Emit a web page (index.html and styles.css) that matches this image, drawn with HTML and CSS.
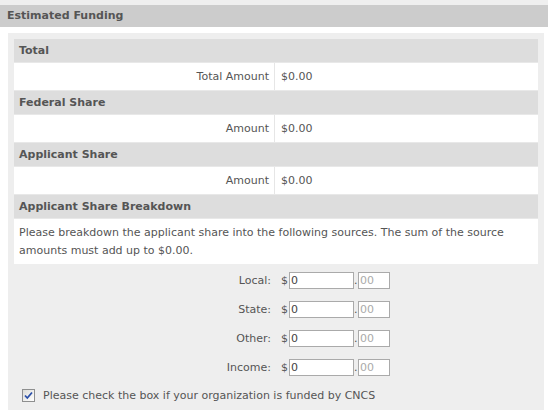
FILE: index.html
```html
<!DOCTYPE html>
<html>
<head>
<meta charset="utf-8">
<link rel="stylesheet" href="styles.css">
</head>
<body>
<div class="topstrip"></div>
<div class="section-head">Estimated Funding</div>
<div class="panel">
  <div class="table">
    <div class="thead">Total</div>
    <div class="row"><div class="lbl">Total Amount</div><div class="val">$0.00</div></div>
    <div class="thead">Federal Share</div>
    <div class="row"><div class="lbl">Amount</div><div class="val">$0.00</div></div>
    <div class="thead">Applicant Share</div>
    <div class="row"><div class="lbl">Amount</div><div class="val">$0.00</div></div>
    <div class="thead">Applicant Share Breakdown</div>
    <div class="para">Please breakdown the applicant share into the following sources. The sum of the source amounts must add up to $0.00.</div>
  </div>
  <div class="form">
    <div class="frow"><span class="flbl">Local:</span><span class="cur">$</span><input class="dollars" value="0"><span class="dot">.</span><input class="cents" placeholder="00"></div>
    <div class="frow"><span class="flbl">State:</span><span class="cur">$</span><input class="dollars" value="0"><span class="dot">.</span><input class="cents" placeholder="00"></div>
    <div class="frow"><span class="flbl">Other:</span><span class="cur">$</span><input class="dollars" value="0"><span class="dot">.</span><input class="cents" placeholder="00"></div>
    <div class="frow"><span class="flbl">Income:</span><span class="cur">$</span><input class="dollars" value="0"><span class="dot">.</span><input class="cents" placeholder="00"></div>
  </div>
  <label class="check">
    <span class="box"><svg width="9" height="9" viewBox="0 0 9 9"><path d="M1 4.5 L3.3 7 L8 1.5" fill="none" stroke="#2b4fa8" stroke-width="1.8"/></svg></span>
    <span>Please check the box if your organization is funded by CNCS</span>
  </label>
</div>
</body>
</html>
```

FILE: styles.css
```css
* { box-sizing: border-box; }
html, body { margin: 0; padding: 0; background: #fff; }
body {
  font-family: "DejaVu Sans", sans-serif;
  font-size: 11px;
  color: #555;
  width: 548px;
}
.topstrip { height: 5px; background: #efefef; }
.section-head {
  height: 22px;
  line-height: 22px;
  background: #cccccc;
  font-weight: bold;
  padding-left: 7px;
  color: #555;
}
.panel {
  margin: 6px 4px 0 8px;
  background: #eeeeee;
  padding: 6px 6px 12px 6px;
}
.table { background: #fff; }
.thead {
  background: #dddddd;
  height: 24px;
  line-height: 23px;
  font-weight: bold;
  padding-left: 5px;
  border-bottom: 1px solid #e8e8e8;
}
.row {
  display: grid;
  grid-template-columns: 261px 1fr;
  height: 28px;
  align-items: stretch;
  border-bottom: 1px solid #e8e8e8;
}
.lbl {
  text-align: right;
  padding-right: 5px;
  line-height: 27px;
  border-right: 1px solid #e6e6e6;
}
.val { padding-left: 6px; line-height: 27px; }
.para {
  padding: 5px 5px 5px 5px;
  line-height: 18px;
  height: 45px;
}
.form { padding-top: 2px; }
.frow {
  display: flex;
  align-items: center;
  height: 29px;
}
.flbl { width: 267px; text-align: right; padding-right: 10px; }
.cur { width: 8px; }
input {
  font-family: inherit;
  font-size: 11px;
  height: 17px;
  border: 1px solid #aaaaaa;
  background: #fff;
  padding: 0 1px;
  margin: 0;
  color: #444;
  outline: none;
}
input::placeholder { color: #aaa; }
.dollars { width: 65px; }
.dot { width: 4px; text-align: left; }
.cents { width: 32px; }
.check {
  display: flex;
  align-items: center;
  margin-top: 7px;
  padding-left: 8px;
  gap: 8px;
}
.box {
  width: 13px;
  height: 13px;
  border: 1px solid #8e8f8f;
  background: linear-gradient(135deg, #dcdcd7, #fff);
  display: flex;
  align-items: center;
  justify-content: center;
}
.box svg { display: block; }
```
